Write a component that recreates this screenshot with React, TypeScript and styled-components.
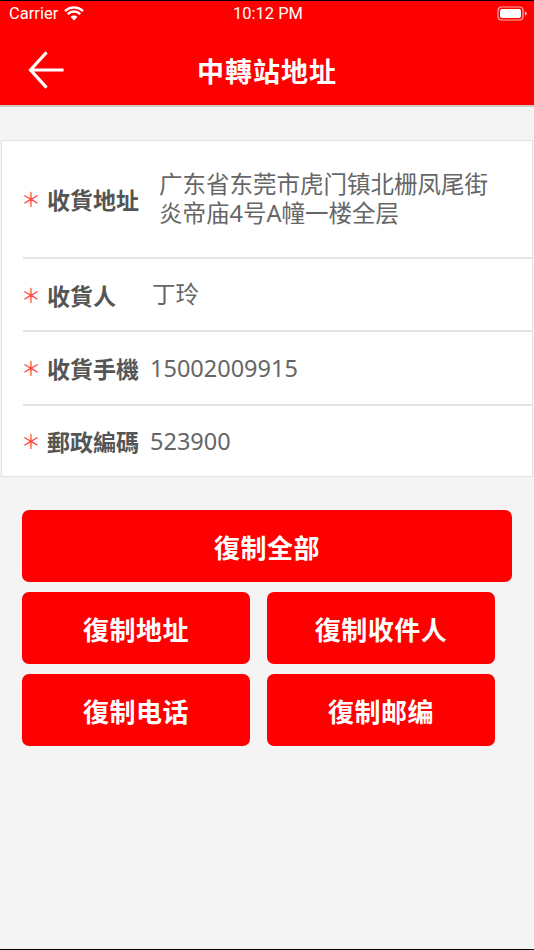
import React from 'react';
import styled, { createGlobalStyle } from 'styled-components';

const GlobalStyle = createGlobalStyle`
  html, body {
    margin: 0;
    padding: 0;
    background: #f4f4f4;
  }
  * {
    box-sizing: border-box;
  }
`;

const Page = styled.div`
  width: 534px;
  height: 950px;
  background: #f4f4f4;
  border-top: 1px solid #000;
  border-bottom: 1px solid #000;
  font-family: 'Noto Sans CJK SC', 'Noto Sans', sans-serif;
  display: flex;
  flex-direction: column;
  overflow: hidden;
`;

const Header = styled.header`
  background: #ff0000;
  border-bottom: 2px solid #c9c9c9;
  color: #fff;
`;

const StatusBar = styled.div`
  height: 25px;
  display: grid;
  grid-template-columns: 1fr auto 1fr;
  align-items: center;
  padding: 0 7px 0 9px;
  font-family: Roboto, 'Liberation Sans', sans-serif;
  font-size: 16.5px;
`;

const StatusLeft = styled.div`
  display: flex;
  align-items: center;
  gap: 6px;
`;

const StatusRight = styled.div`
  display: flex;
  justify-content: flex-end;
`;

const NavBar = styled.div`
  height: 79px;
  display: flex;
  align-items: center;
  justify-content: center;
  position: relative;
`;

const BackButton = styled.button`
  position: absolute;
  left: 26px;
  top: 24px;
  width: 40px;
  height: 40px;
  padding: 0;
  border: none;
  background: transparent;
  display: flex;
  align-items: center;
  justify-content: center;
`;

const Title = styled.h1`
  margin: 10px 0 0;
  font-size: 27px;
  font-weight: 700;
  letter-spacing: 1px;
`;

const Card = styled.section`
  margin: 33px 1px 0;
  background: #fff;
  border: 1px solid #e2e2e2;
`;

const Row = styled.div<{ $height: number }>`
  min-height: ${(p) => p.$height}px;
  margin-left: 21px;
  display: flex;
  align-items: center;
  & + & {
    border-top: 2px solid #e4e4e4;
  }
`;

const Star = styled.span`
  width: 16px;
  margin-right: 8px;
  display: flex;
  justify-content: center;
  color: #ff4a4a;
  font-size: 20px;
  line-height: 1;
`;

const Label = styled.span`
  font-size: 23px;
  font-weight: 700;
  color: #555;
  white-space: nowrap;
`;

const Value = styled.span<{ $indent: number }>`
  margin-left: ${(p) => p.$indent}px;
  font-family: 'Noto Sans', 'Noto Sans CJK SC', sans-serif;
  font-size: 23.5px;
  line-height: 29px;
  color: #666;
  padding-right: 30px;
`;

const Actions = styled.div`
  margin: 33px 0 0 22px;
  display: grid;
  grid-template-columns: 228px 228px;
  column-gap: 17px;
  row-gap: 10px;
`;

const ActionButton = styled.button<{ $wide?: boolean }>`
  grid-column: ${(p) => (p.$wide ? '1 / span 2' : 'auto')};
  width: ${(p) => (p.$wide ? '490px' : '228px')};
  height: 72px;
  border: none;
  border-radius: 7px;
  background: #ff0000;
  color: #fff;
  font-family: 'Noto Sans CJK SC', sans-serif;
  font-size: 26px;
  font-weight: 700;
  letter-spacing: 0.5px;
`;

function Wifi() {
  return (
    <svg width="20" height="15" viewBox="0 0 20 15">
      <path d="M10 14.5 L6.6 10.9 A4.8 4.8 0 0 1 13.4 10.9 Z" fill="#fff" />
      <path d="M3.8 8.1 A8.8 8.8 0 0 1 16.2 8.1" stroke="#fff" strokeWidth="2.4" fill="none" />
      <path d="M1 5.2 A12.8 12.8 0 0 1 19 5.2" stroke="#fff" strokeWidth="2.4" fill="none" />
    </svg>
  );
}

function Battery() {
  return (
    <svg width="30" height="15" viewBox="0 0 30 15">
      <rect x="1" y="1" width="25" height="13" rx="3.5" fill="none" stroke="#ffb0b0" strokeWidth="1.2" />
      <rect x="3" y="3" width="21" height="9" rx="2" fill="#fff" />
      <path d="M27.8 5.5 a2 2 0 0 1 0 4" fill="#ffb0b0" />
    </svg>
  );
}

function BackArrow() {
  return (
    <svg width="38" height="40" viewBox="0 0 38 40">
      <path d="M35 20 H4 M18.5 3.5 L3.5 20 L18.5 36.5" stroke="#fff" strokeWidth="3.2" fill="none" strokeLinecap="square" />
    </svg>
  );
}

const rows = [
  { label: '收貨地址', value: '广东省东莞市虎门镇北栅凤尾街\n炎帝庙4号A幢一楼全层', height: 116, indent: 20 },
  { label: '收貨人', value: '丁玲', height: 73, indent: 36 },
  { label: '收貨手機', value: '15002009915', height: 74, indent: 11 },
  { label: '郵政編碼', value: '523900', height: 72, indent: 11 }
];

const actions = ['復制地址', '復制收件人', '復制电话', '復制邮编'];

export default function App() {
  return (
    <Page>
      <GlobalStyle />
      <Header>
        <StatusBar>
          <StatusLeft>
            <span>Carrier</span>
            <Wifi />
          </StatusLeft>
          <span>10:12 PM</span>
          <StatusRight>
            <Battery />
          </StatusRight>
        </StatusBar>
        <NavBar>
          <BackButton aria-label="back">
            <BackArrow />
          </BackButton>
          <Title>中轉站地址</Title>
        </NavBar>
      </Header>
      <Card>
        {rows.map((row) => (
          <Row key={row.label} $height={row.height}>
            <Star>＊</Star>
            <Label>{row.label}</Label>
            <Value $indent={row.indent}>
              {row.value.split('\n').map((line, i) => (
                <React.Fragment key={i}>
                  {i > 0 && <br />}
                  {line}
                </React.Fragment>
              ))}
            </Value>
          </Row>
        ))}
      </Card>
      <Actions>
        <ActionButton $wide>復制全部</ActionButton>
        {actions.map((a) => (
          <ActionButton key={a}>{a}</ActionButton>
        ))}
      </Actions>
    </Page>
  );
}
